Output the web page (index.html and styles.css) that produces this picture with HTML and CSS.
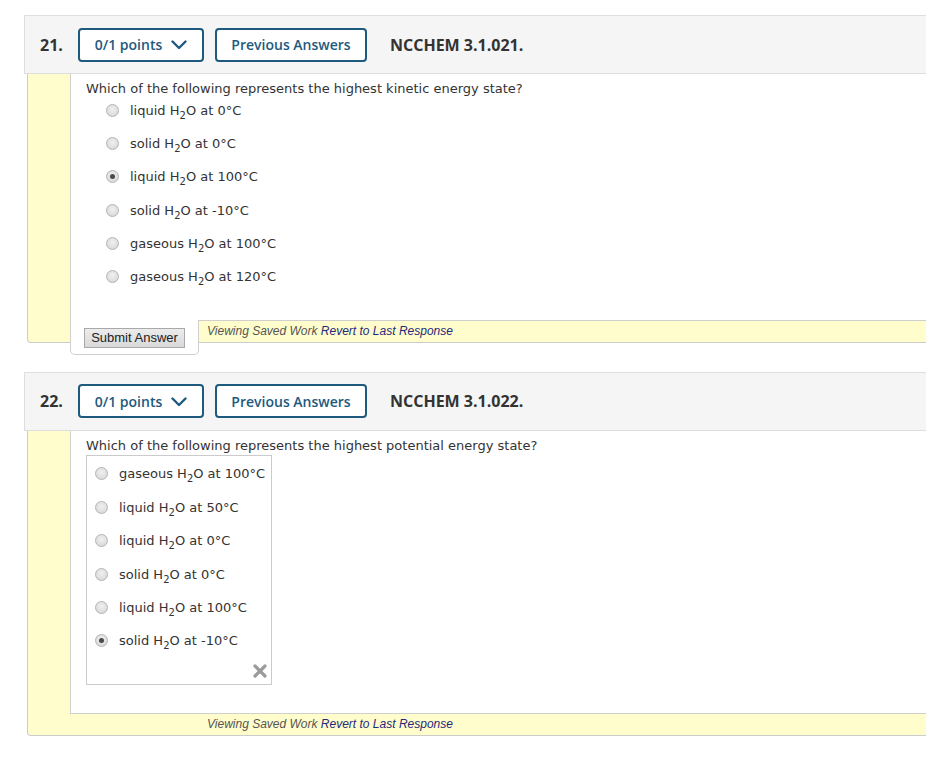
FILE: index.html
```html
<!DOCTYPE html>
<html lang="en">
<head>
<meta charset="utf-8">
<title>Questions</title>
<link rel="stylesheet" href="styles.css">
</head>
<body>
<div class="page">
  <section class="question">
    <div class="qhead">
      <span class="qnum">21.</span>
      <button class="pill pill-points">0/1 points
        <svg class="chev" width="16" height="10" viewBox="0 0 16 10"><polyline points="1.5,1.5 8,8 14.5,1.5" fill="none" stroke="#1d5a7e" stroke-width="2.4" stroke-linecap="round" stroke-linejoin="round"/></svg>
      </button>
      <button class="pill pill-prev">Previous Answers</button>
      <span class="qcode">NCCHEM 3.1.021.</span>
    </div>
    <div class="qbody">
      <div class="panel panel-q21">
        <p class="prompt">Which of the following represents the highest kinetic energy state?</p>
        <ul class="choices choices-indent">
          <li><span class="radio"></span><span>liquid H<sub>2</sub>O at 0°C</span></li>
          <li><span class="radio"></span><span>solid H<sub>2</sub>O at 0°C</span></li>
          <li><span class="radio checked"></span><span>liquid H<sub>2</sub>O at 100°C</span></li>
          <li><span class="radio"></span><span>solid H<sub>2</sub>O at -10°C</span></li>
          <li><span class="radio"></span><span>gaseous H<sub>2</sub>O at 100°C</span></li>
          <li><span class="radio"></span><span>gaseous H<sub>2</sub>O at 120°C</span></li>
        </ul>
      </div>
      <div class="footer">
        <div class="submit-box"><button class="submit">Submit Answer</button></div>
        <div class="status"><span class="muted">Viewing Saved Work</span> <a class="revert">Revert to Last Response</a></div>
      </div>
    </div>
  </section>

  <section class="question">
    <div class="qhead">
      <span class="qnum">22.</span>
      <button class="pill pill-points">0/1 points
        <svg class="chev" width="16" height="10" viewBox="0 0 16 10"><polyline points="1.5,1.5 8,8 14.5,1.5" fill="none" stroke="#1d5a7e" stroke-width="2.4" stroke-linecap="round" stroke-linejoin="round"/></svg>
      </button>
      <button class="pill pill-prev">Previous Answers</button>
      <span class="qcode">NCCHEM 3.1.022.</span>
    </div>
    <div class="qbody">
      <div class="panel panel-q22">
        <p class="prompt">Which of the following represents the highest potential energy state?</p>
        <div class="choice-box">
          <ul class="choices">
            <li><span class="radio"></span><span>gaseous H<sub>2</sub>O at 100°C</span></li>
            <li><span class="radio"></span><span>liquid H<sub>2</sub>O at 50°C</span></li>
            <li><span class="radio"></span><span>liquid H<sub>2</sub>O at 0°C</span></li>
            <li><span class="radio"></span><span>solid H<sub>2</sub>O at 0°C</span></li>
            <li><span class="radio"></span><span>liquid H<sub>2</sub>O at 100°C</span></li>
            <li><span class="radio checked"></span><span>solid H<sub>2</sub>O at -10°C</span></li>
          </ul>
          <div class="clear-row">
            <svg class="xicon" width="14" height="14" viewBox="0 0 14 14"><path d="M2 2 L12 12 M12 2 L2 12" stroke="#9b9b9b" stroke-width="3.2" stroke-linecap="round"/></svg>
          </div>
        </div>
      </div>
      <div class="footer">
        <div class="spacer"></div>
        <div class="status status-q22"><span class="muted">Viewing Saved Work</span> <a class="revert">Revert to Last Response</a></div>
      </div>
    </div>
  </section>
</div>
</body>
</html>
```

FILE: styles.css
```css
html, body {
  margin: 0;
  padding: 0;
  background: #fff;
  overflow: hidden;
}

body {
  font-family: "DejaVu Sans", Verdana, sans-serif;
  color: #333;
}

.page {
  padding: 15px 0 0 24px;
  width: 980px;
}

.question + .question {
  margin-top: 29px;
}

.qhead {
  box-sizing: border-box;
  height: 59px;
  border: 1px solid #dedede;
  background: #f5f5f5;
  display: flex;
  align-items: center;
  padding-left: 15px;
  font-family: "Open Sans", sans-serif;
}

.qnum {
  width: 38px;
  font-size: 16px;
  font-weight: 700;
  color: #333;
}

.pill {
  box-sizing: border-box;
  height: 34px;
  border: 2px solid #1d5a7e;
  border-radius: 4px;
  background: #fff;
  color: #1d5a7e;
  font-family: "Open Sans", sans-serif;
  font-size: 14px;
  font-weight: 600;
  display: flex;
  align-items: center;
  justify-content: center;
  padding: 0;
}

.pill-points {
  width: 126px;
  gap: 9px;
}

.pill-prev {
  width: 152px;
  margin-left: 11px;
}

.chev {
  display: block;
  margin-top: 1px;
}

.qcode {
  margin-left: 23px;
  font-size: 16px;
  font-weight: 700;
  color: #333;
}

.qbody {
  margin-left: 3px;
  border: 1px solid #ccc;
  border-top: none;
  border-radius: 0 0 0 4px;
  background: #fffdcc;
  padding-left: 42px;
}

.panel {
  background: #fff;
  border-left: 1px solid #cfcfcf;
  border-bottom: 1px solid #cfcfcf;
  padding: 6px 0 33px 15px;
}

.panel-q22 {
  padding-bottom: 28px;
}

.prompt {
  margin: 0;
  font-size: 13px;
  line-height: 18px;
  color: #333;
}

.choices {
  list-style: none;
  margin: 2px 0 0;
  padding: 0;
  display: flex;
  flex-direction: column;
  gap: 13.4px;
}

.choices-indent {
  padding-left: 20px;
}

.choices li {
  height: 20px;
  display: flex;
  align-items: center;
  gap: 11px;
  font-size: 13px;
  color: #333;
}

.choices sub {
  font-size: 10px;
  line-height: 0;
  vertical-align: -4px;
}

.radio {
  box-sizing: border-box;
  width: 13px;
  height: 13px;
  border-radius: 50%;
  border: 1px solid #b4b4b4;
  background: radial-gradient(circle at 50% 40%, #f0f0f0 0%, #dcdcdc 70%, #cfcfcf 100%);
  flex: none;
  position: relative;
}

.radio.checked::after {
  content: "";
  position: absolute;
  left: 3px;
  top: 3px;
  width: 5px;
  height: 5px;
  border-radius: 50%;
  background: #4a4a4a;
}

.choice-box {
  box-sizing: border-box;
  width: 186px;
  margin-top: 0;
  border: 1px solid #cbcbcb;
  padding: 6px 4px 6px 8px;
}

.clear-row {
  margin-top: 13px;
  display: flex;
  justify-content: flex-end;
}

.xicon {
  display: block;
}

.footer {
  display: flex;
  align-items: flex-start;
}

.submit-box {
  box-sizing: border-box;
  width: 129px;
  height: 35px;
  margin-top: -1px;
  margin-bottom: -13px;
  background: #fff;
  border: 1px solid #cfcfcf;
  border-top: none;
  border-radius: 0 0 5px 5px;
  padding: 7px 0 0 13px;
  position: relative;
}

.submit {
  box-sizing: border-box;
  width: 101px;
  height: 20px;
  padding: 0;
  border: 1px solid #a9a9a9;
  background: linear-gradient(#ececec, #d9d9d9);
  font-family: "Liberation Sans", Arial, sans-serif;
  font-size: 13px;
  color: #222;
  line-height: 18px;
}

.spacer {
  width: 129px;
  flex: none;
}

.status {
  flex: 1;
  height: 21px;
  line-height: 21px;
  padding-left: 8px;
  font-family: "Liberation Sans", Arial, sans-serif;
  font-size: 12px;
  font-style: italic;
}

.status-q22 {
  height: 21px;
}

.muted {
  color: #555;
}

.revert {
  color: #1f2a7c;
}
```
